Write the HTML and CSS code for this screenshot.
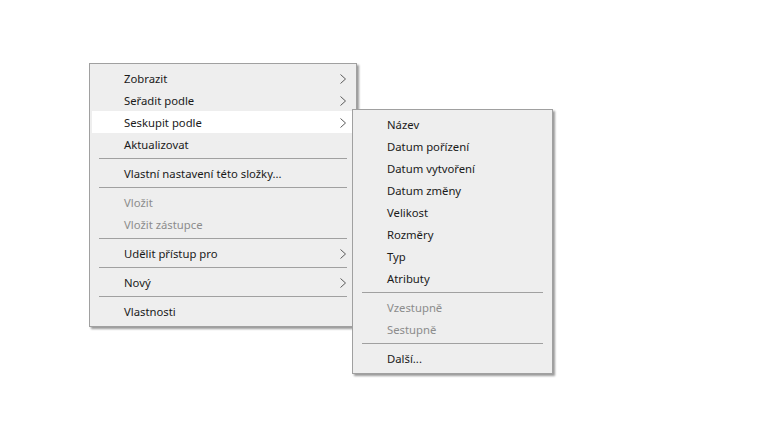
FILE: index.html
```html
<!DOCTYPE html>
<html lang="cs">
<head>
<meta charset="utf-8">
<title>Kontextová nabídka</title>
<link rel="stylesheet" href="styles.css">
</head>
<body>
<div class="desk">
  <ul class="menu menu-main">
    <li class="item has-sub">Zobrazit<svg class="chev" viewBox="0 0 6 10"><path d="M0.5 0.5 L5.5 5 L0.5 9.5"/></svg></li>
    <li class="item has-sub">Seřadit podle<svg class="chev" viewBox="0 0 6 10"><path d="M0.5 0.5 L5.5 5 L0.5 9.5"/></svg></li>
    <li class="item has-sub active">Seskupit podle<svg class="chev" viewBox="0 0 6 10"><path d="M0.5 0.5 L5.5 5 L0.5 9.5"/></svg></li>
    <li class="item">Aktualizovat</li>
    <li class="sep"></li>
    <li class="item">Vlastní nastavení této složky...</li>
    <li class="sep"></li>
    <li class="item disabled">Vložit</li>
    <li class="item disabled">Vložit zástupce</li>
    <li class="sep"></li>
    <li class="item has-sub">Udělit přístup pro<svg class="chev" viewBox="0 0 6 10"><path d="M0.5 0.5 L5.5 5 L0.5 9.5"/></svg></li>
    <li class="sep"></li>
    <li class="item has-sub">Nový<svg class="chev" viewBox="0 0 6 10"><path d="M0.5 0.5 L5.5 5 L0.5 9.5"/></svg></li>
    <li class="sep"></li>
    <li class="item">Vlastnosti</li>
  </ul>
  <ul class="menu menu-sub">
    <li class="item">Název</li>
    <li class="item">Datum pořízení</li>
    <li class="item">Datum vytvoření</li>
    <li class="item">Datum změny</li>
    <li class="item">Velikost</li>
    <li class="item">Rozměry</li>
    <li class="item">Typ</li>
    <li class="item">Atributy</li>
    <li class="sep"></li>
    <li class="item disabled">Vzestupně</li>
    <li class="item disabled">Sestupně</li>
    <li class="sep"></li>
    <li class="item">Další...</li>
  </ul>
</div>
</body>
</html>
```

FILE: styles.css
```css
html, body {
  margin: 0;
  padding: 0;
  background: #ffffff;
}

.desk {
  position: relative;
  width: 777px;
  height: 437px;
  font-family: "Noto Sans", "Open Sans", "DejaVu Sans", sans-serif;
  font-size: 11.3px;
  color: #1a1a1a;
}

.menu {
  position: absolute;
  margin: 0;
  list-style: none;
  background: #eeeeee;
  border: 1px solid #a0a0a0;
  box-shadow: 2px 2px 2px rgba(0, 0, 0, 0.4);
  padding: 3px 0 4px;
  display: flex;
  flex-direction: column;
}

.menu-main {
  left: 89px;
  top: 63px;
  width: 266px;
}

.menu-sub {
  left: 352px;
  top: 109px;
  width: 199px;
}

.item {
  display: flex;
  align-items: center;
  justify-content: space-between;
  height: 22px;
  margin: 0 2px;
  padding: 1px 8px 0 32px;
  box-sizing: border-box;
  white-space: nowrap;
}

.item.active {
  background: #ffffff;
}

.item.disabled {
  color: #8c8c8c;
}

.chev {
  width: 6px;
  height: 10px;
  fill: none;
  stroke: #5a5a5a;
  stroke-width: 1;
}

.sep {
  height: 7px;
  display: flex;
  align-items: center;
  padding: 0 9px;
}

.sep::after {
  content: "";
  flex: 1;
  height: 1px;
  background: #a0a0a0;
}
```
